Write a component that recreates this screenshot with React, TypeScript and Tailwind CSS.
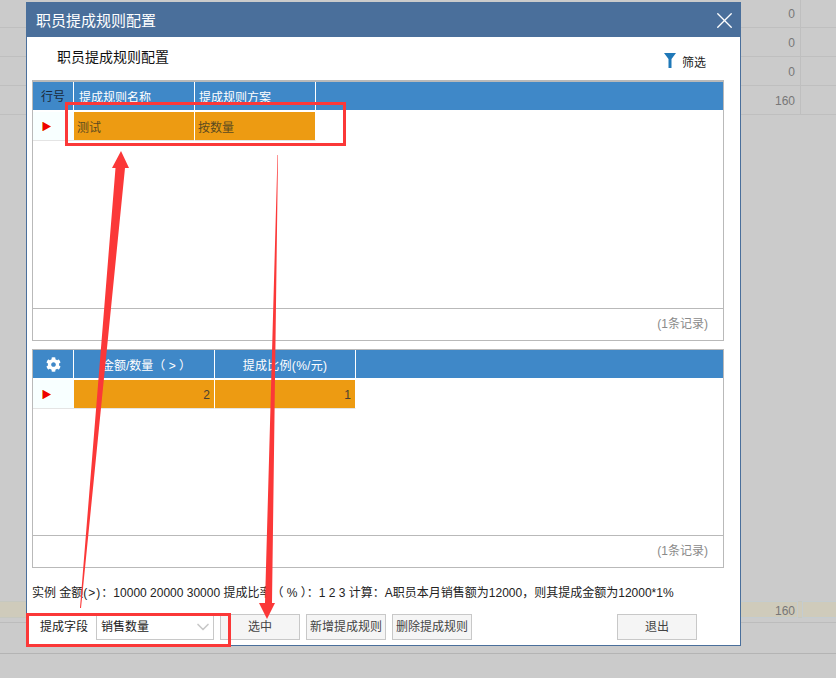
import { ChevronDown, X } from 'lucide-react'
import { FaCog } from 'react-icons/fa'

const cjk = { fontFamily: '"Liberation Sans", "Noto Sans CJK SC", sans-serif' }

function Marker() {
  return (
    <svg width="9" height="9" viewBox="0 0 9 9">
      <path d="M0 0 H1 V9 H0 Z" fill="#e8912a" />
      <path d="M1 0 L9 4.5 L1 9 Z" fill="#f00000" />
    </svg>
  )
}

function Background() {
  return (
    <div className="absolute inset-0 flex flex-col bg-[#cbcbcb]">
      <div className="h-[28px] border-b border-[#bfbfbf]" />
      <div className="h-[29px] border-b border-[#bfbfbf]" />
      <div className="h-[29px] border-b border-[#bfbfbf]" />
      <div className="h-[29px] border-b border-[#bfbfbf]" />
      <div className="h-[486px]" />
      <div className="h-[17px] bg-[#cfcbbb] border-y border-[#c6c8c0]" />
      <div className="h-[5px] border-b border-[#bcbcbc]" />
      <div className="h-[31px] border-b border-[#b4b4b4]" />
    </div>
  )
}

function BgCells() {
  return (
    <div className="absolute left-[741px] top-0 w-[95px] flex flex-col text-[12px] text-[#777777]">
      {['0', '0', '0', '160'].map((v, i) => (
        <div key={i} className={`${i === 0 ? 'h-[28px]' : 'h-[29px]'} w-[60px] flex items-center justify-end border-r border-[#bfbfbf] pr-[5px]`}>{v}</div>
      ))}
      <div className="h-[486px]" />
      <div className="h-[17px] flex">
        <div className="w-[57px] flex items-center justify-end pr-[2px] pt-[2px] border border-l-0 border-[#c4ccd0]">160</div>
        <div className="ml-[4px] flex-1 border border-r-0 border-[#c4ccd0]" />
      </div>
    </div>
  )
}

function Footer() {
  return (
    <div className="h-[32px] shrink-0 border-t border-[#b9b9b9] flex items-center justify-end pr-[15px] pb-[2px] text-[12px] text-[#8a8a8a]">(1条记录)</div>
  )
}

export default function App() {
  return (
    <div className="relative h-[678px] w-[836px] overflow-hidden" style={cjk}>
      <Background />
      <BgCells />

      {/* dialog */}
      <div className="absolute left-[26px] top-[2px] w-[715px] h-[644px] bg-white border-x border-b border-[#4a6f9b] flex flex-col">
        <div className="h-[35px] shrink-0 bg-[#4a6f9b] flex items-center justify-between pl-[9px] pr-[2px] text-[15px] text-white">
          <span className="pt-[4px]">职员提成规则配置</span>
          <X size={27} strokeWidth={1.2} className="mt-[2px]" />
        </div>

        <div className="h-[43px] shrink-0 flex items-start justify-between pl-[30px] pr-[34px] pt-[10px]">
          <span className="text-[14px] leading-[20px] text-[#111]">职员提成规则配置</span>
          <span className="flex items-start gap-[6px] mt-[6px] text-[12px] leading-[16px] text-[#222]">
            <svg width="12" height="15" viewBox="0 0 12 15">
              <path d="M0 0 H12 L7.5 6 V15 H4.5 V6 Z" fill="#1f78b8" />
            </svg>
            <span className="mt-[2px]">筛选</span>
          </span>
        </div>

        {/* rules table */}
        <div className="mx-[5px] w-[692px] h-[261px] shrink-0 border border-t-2 border-[#b9b9b9] flex flex-col">
          <div className="h-[28px] shrink-0 bg-[#3f88c8] flex text-[12px] text-white">
            <div className="w-[41px] flex items-center justify-center pt-[2px] border-r border-white text-[#1a2a3a]">行号</div>
            <div className="w-[121px] flex items-center pl-[5px] pt-[4px] border-r border-white">提成规则名称</div>
            <div className="w-[121px] flex items-center pl-[4px] pt-[4px] border-r border-white">提成规则方案</div>
          </div>
          <div className="h-[29px] mt-[2px] shrink-0 flex text-[12px] text-[#5a4a20]">
            <div className="w-[41px] flex items-center pl-[9px] bg-[#f8ffff] border-b border-[#e4e4e4]"><Marker /></div>
            <div className="w-[121px] flex items-center pl-[3px] pt-[3px] bg-[#ed9b12] border-r border-white border-b border-b-[#e4e4e4]">测试</div>
            <div className="w-[121px] flex items-center pl-[3px] pt-[3px] bg-[#ed9b12] border-r border-white border-b border-b-[#e4e4e4]">按数量</div>
          </div>
          <div className="flex-1" />
          <Footer />
        </div>

        {/* ratio table */}
        <div className="mt-[8px] mx-[5px] w-[692px] h-[219px] shrink-0 border border-[#b9b9b9] flex flex-col">
          <div className="h-[28px] shrink-0 bg-[#3f88c8] flex text-[12px] text-white">
            <div className="w-[41px] flex items-center justify-center border-r border-white"><FaCog size={15} /></div>
            <div className="w-[141px] flex items-center justify-center pt-[4px] pl-[5px] border-r border-white whitespace-pre">金额/数量（ {'>'} ）</div>
            <div className="w-[141px] flex items-center justify-center pt-[4px] tracking-[0.3px] border-r border-white">提成比例(%/元)</div>
          </div>
          <div className="h-[29px] mt-[2px] shrink-0 flex text-[12px] text-[#4a4030]">
            <div className="w-[41px] flex items-center pl-[9px] bg-[#f8ffff] border-b border-[#e4e4e4]"><Marker /></div>
            <div className="w-[141px] flex items-center justify-end pr-[4px] pt-[2px] bg-[#ed9b12] border-r border-white border-b border-b-[#e4e4e4]">2</div>
            <div className="w-[141px] flex items-center justify-end pr-[4px] pt-[2px] bg-[#ed9b12] border-r border-white border-b border-b-[#e4e4e4]">1</div>
          </div>
          <div className="flex-1" />
          <Footer />
        </div>

        <div className="mt-[16px] pl-[5px] text-[12px] leading-[18px] text-[#222] whitespace-nowrap">
          实例 金额<span className="tracking-[1px]">({'>'})</span>：10000 20000 30000 提成比率（ % ）：1 2 3 计算：A职员本月销售额为12000，则其提成金额为12000*1%
        </div>

        {/* bottom bar */}
        <div className="mt-[12px] flex items-center pl-[13px] text-[12px] text-[#444]">
          <span className="w-[56px] text-[#222]">提成字段</span>
          <div className="w-[118px] h-[26px] border border-[#c8c8c8] flex items-center justify-between pl-[4px] text-[#222]">
            销售数量
            <ChevronDown size={20} strokeWidth={2} className="text-[#c8c8c8]" />
          </div>
          <button className="ml-[6px] w-[80px] h-[26px] border border-[#c8c8c8] bg-[#f5f5f5]">选中</button>
          <button className="ml-[6px] w-[80px] h-[26px] border border-[#c8c8c8] bg-[#f5f5f5]">新增提成规则</button>
          <button className="ml-[6px] w-[80px] h-[26px] border border-[#c8c8c8] bg-[#f5f5f5]">删除提成规则</button>
          <button className="ml-[145px] w-[80px] h-[26px] border border-[#c8c8c8] bg-[#f5f5f5]">退出</button>
        </div>
      </div>

      {/* red annotations */}
      <div className="absolute left-[65px] top-[102px] w-[281px] h-[44px] border-[3px] border-[#fb3838]" />
      <div className="absolute left-[26px] top-[613px] w-[205px] h-[34px] border-[3px] border-[#fb3838]" />
      <svg className="absolute left-0 top-0 pointer-events-none" width="836" height="678" viewBox="0 0 836 678">
        <path d="M80 608 L115.5 168 L112 168 L121 151 L129 168 L125 168 L81 608 Z" fill="#fb3838" />
        <path d="M277.5 155 L278 155 L272 603 L275 603 L267 619 L259 603 L265 603 Z" fill="#fb3838" />
      </svg>
    </div>
  )
}
